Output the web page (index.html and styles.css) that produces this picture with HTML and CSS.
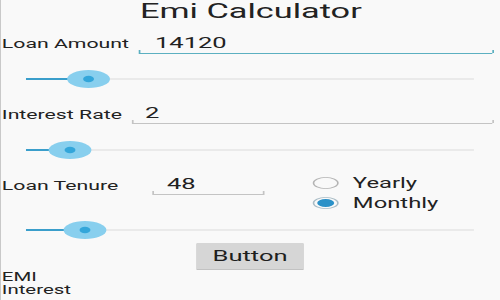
FILE: index.html
```html
<!DOCTYPE html>
<html>
<head>
<meta charset="utf-8">
<link rel="stylesheet" href="styles.css">
</head>
<body>
<div class="frame">
  <div class="screen">
    <div class="title">Emi Calculator</div>

    <div class="row row-amount">
      <div class="label label-amount">Loan Amount</div>
      <div class="edit edit-wide edit-focused">14120</div>
    </div>
    <svg class="slider" width="293" height="20" viewBox="0 0 293 20">
      <line x1="14.7" y1="10" x2="278.2" y2="10" stroke="#dcdcdc" stroke-width="1.2"/>
      <line x1="14.7" y1="10" x2="51.5" y2="10" stroke="#3a9ecb" stroke-width="2.2"/>
      <ellipse cx="51.5" cy="10" rx="12.6" ry="9" fill="#88cfee"/>
      <ellipse cx="51.5" cy="10" rx="3.2" ry="3.2" fill="#33a6da"/>
    </svg>

    <div class="row row-rate">
      <div class="label label-rate">Interest Rate</div>
      <div class="edit edit-wide edit-rate">2</div>
    </div>
    <svg class="slider" width="293" height="20" viewBox="0 0 293 20">
      <line x1="14.7" y1="10" x2="278.2" y2="10" stroke="#dcdcdc" stroke-width="1.2"/>
      <line x1="14.7" y1="10" x2="40.6" y2="10" stroke="#3a9ecb" stroke-width="2.2"/>
      <ellipse cx="40.6" cy="10" rx="12.6" ry="9" fill="#88cfee"/>
      <ellipse cx="40.6" cy="10" rx="3.2" ry="3.2" fill="#33a6da"/>
    </svg>

    <div class="row-tenure">
      <div class="row tenure-left">
        <div class="label label-tenure">Loan Tenure</div>
        <div class="edit edit-short">48</div>
      </div>
      <div class="radios">
        <div class="radio">
          <svg class="radio-mark" width="16" height="20" viewBox="0 0 16 20">
            <ellipse cx="8" cy="10" rx="7.2" ry="5.6" fill="none" stroke="#b4b4b4" stroke-width="0.9"/>
          </svg>
          <span class="radio-text">Yearly</span>
        </div>
        <div class="radio">
          <svg class="radio-mark" width="16" height="20" viewBox="0 0 16 20">
            <ellipse cx="8" cy="10" rx="7.2" ry="5.6" fill="none" stroke="#a9bcc6" stroke-width="0.9"/>
            <ellipse cx="8" cy="10" rx="5" ry="4" fill="#2a91c8"/>
          </svg>
          <span class="radio-text">Monthly</span>
        </div>
      </div>
    </div>
    <svg class="slider slider-last" width="293" height="20" viewBox="0 0 293 20">
      <line x1="14.7" y1="10" x2="278.2" y2="10" stroke="#dcdcdc" stroke-width="1.2"/>
      <line x1="14.7" y1="10" x2="49.4" y2="10" stroke="#3a9ecb" stroke-width="2.2"/>
      <ellipse cx="49.4" cy="10" rx="12.6" ry="9" fill="#88cfee"/>
      <ellipse cx="49.4" cy="10" rx="3.2" ry="3.2" fill="#33a6da"/>
    </svg>

    <div class="button">Button</div>

    <div class="result">EMI</div>
    <div class="result">Interest</div>
  </div>
</div>
</body>
</html>
```

FILE: styles.css
```css
html, body {
  margin: 0;
  padding: 0;
  background: #f9f9f9;
}

.frame {
  width: 499px;
  height: 300px;
  border-left: 1px solid #c9c9c9;
  overflow: hidden;
}

.screen {
  width: 293px;
  transform: scaleX(1.7);
  transform-origin: 0 0;
  font-family: Roboto, "Noto Sans", sans-serif;
  color: #222;
}

.title {
  height: 23.4px;
  font-size: 20.2px;
  line-height: 23.4px;
  text-align: center;
  padding-left: 1px;
}

.row {
  display: flex;
  align-items: flex-end;
  padding-left: 0.5px;
}

.row-amount {
  height: 30.6px;
}

.row-rate {
  height: 36px;
}

.label {
  flex: none;
  font-size: 12.5px;
  line-height: 16px;
  white-space: nowrap;
}

.label-amount {
  width: 80.1px;
  margin-bottom: 1.8px;
}

.label-rate {
  width: 76.6px;
  margin-bottom: 2.3px;
}

.label-tenure {
  width: 88.3px;
  margin-bottom: 1.8px;
}

.edit {
  position: relative;
  font-size: 15px;
  line-height: 18px;
  padding-bottom: 1px;
  border-bottom: 1.2px solid #c4c4c4;
}

.edit::before,
.edit::after {
  content: "";
  position: absolute;
  bottom: 0;
  width: 0.8px;
  height: 3px;
  background-color: #c4c4c4;
}

.edit::before {
  left: 0;
}

.edit::after {
  right: 0;
}

.edit-wide {
  flex: 1;
  margin-right: 3.7px;
  padding-left: 10px;
}

.edit-focused {
  border-bottom: 1.5px solid #5cb0c1;
}

.edit-focused::before,
.edit-focused::after {
  background-color: #5cb0c1;
}

.edit-rate {
  padding-left: 7.6px;
  margin-bottom: 0.5px;
}

.edit-short {
  width: 57.7px;
  padding-left: 8.8px;
}

.slider {
  display: block;
  margin-top: 15px;
}

.slider-last {
  margin-top: 0;
}

.row-tenure {
  display: flex;
  align-items: flex-start;
  height: 60px;
}

.tenure-left {
  height: 35.5px;
}

.radios {
  display: flex;
  flex-direction: column;
  margin-top: 13px;
  margin-left: 27.3px;
}

.radio {
  display: flex;
  align-items: center;
  height: 20px;
}

.radio-mark {
  display: block;
  flex: none;
}

.radio-text {
  margin-left: 8.4px;
  font-size: 14px;
  line-height: 20px;
}

.button {
  width: 62.9px;
  height: 26px;
  margin: 3px auto 0;
  background: #d6d6d6;
  box-shadow: 0 1px 0 #c2c2c2;
  font-size: 15px;
  line-height: 26px;
  text-align: center;
  color: #1e1e1e;
}

.result {
  font-size: 12px;
  line-height: 13px;
  padding-left: 0.5px;
}

.button + .result {
  margin-top: 2.4px;
}
```
